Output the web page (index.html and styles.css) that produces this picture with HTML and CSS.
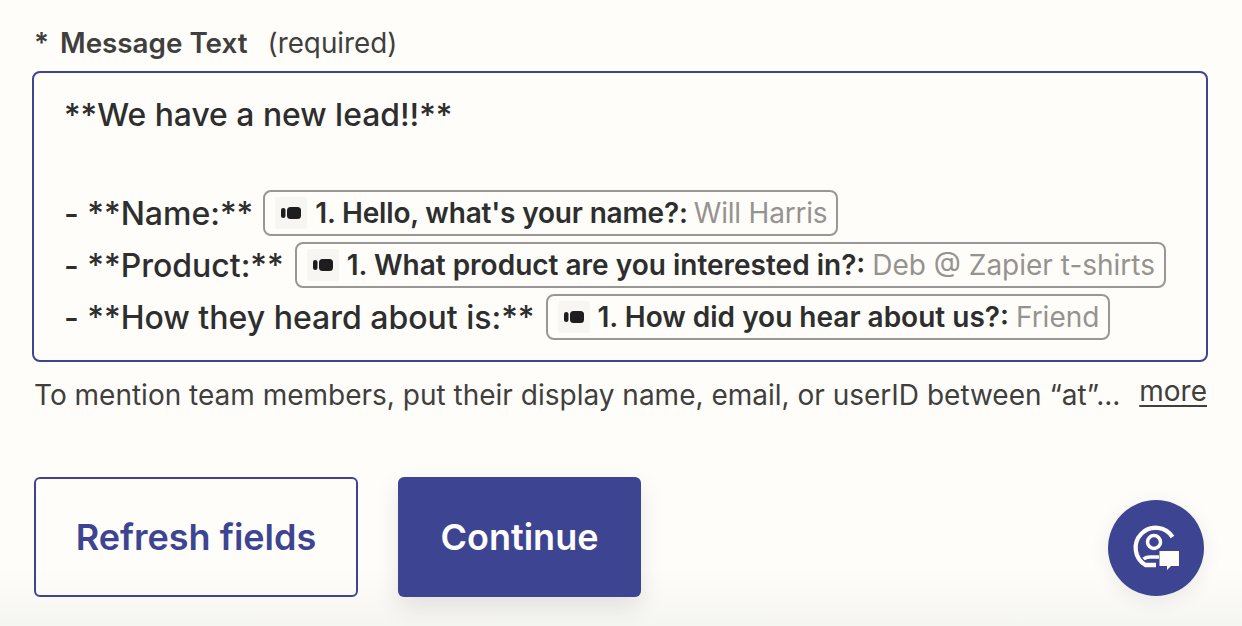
FILE: index.html
```html
<!DOCTYPE html>
<html lang="en">
<head>
    <meta charset="UTF-8">
    <title>Message Text</title>
    <link rel="stylesheet" href="styles.css">
</head>
<body>
    <div class="field">
        <div class="label"><span class="star">*</span><b>Message Text</b><span class="req">(required)</span></div>
        <div class="editor">
            <div class="line first">**We have a new lead!!**</div>
            <div class="line name">- **Name:** <span class="pill tight"><span class="pill-icon"><svg width="20" height="12" viewBox="0 0 20 12"><rect x="0" y="1" width="4.500" height="10" rx="2.200"/><rect x="6" y="0" width="14" height="12" rx="3.500"/></svg></span><b>1. Hello, what's your name?:</b><span class="val">Will Harris</span></span></div>
            <div class="line">- **Product:** <span class="pill"><span class="pill-icon"><svg width="20" height="12" viewBox="0 0 20 12"><rect x="0" y="1" width="4.500" height="10" rx="2.200"/><rect x="6" y="0" width="14" height="12" rx="3.500"/></svg></span><b>1. What product are you interested in?:</b><span class="val">Deb @ Zapier t-shirts</span></span></div>
            <div class="line">- **How they heard about is:** <span class="pill"><span class="pill-icon"><svg width="20" height="12" viewBox="0 0 20 12"><rect x="0" y="1" width="4.500" height="10" rx="2.200"/><rect x="6" y="0" width="14" height="12" rx="3.500"/></svg></span><b>1. How did you hear about us?:</b><span class="val">Friend</span></span></div>
        </div>
        <div class="hint">
            <span>To mention team members, put their display name, email, or userID between “at”...</span>
            <a href="#" class="more">more</a>
        </div>
    </div>
    <div class="actions">
        <button class="btn btn-outline">Refresh fields</button>
        <button class="btn btn-solid">Continue</button>
    </div>
    <div class="fab">
        <svg width="60" height="60" viewBox="0 0 60 60" fill="none">
            <path d="M46.500 19 A20 20 0 1 0 19.500 47 H30" stroke="#fffdf9" stroke-width="4.300"/>
            <circle cx="28" cy="24" r="6.500" stroke="#fffdf9" stroke-width="3.500"/>
            <path d="M17.500 41 Q20 39 24 39 H33" stroke="#fffdf9" stroke-width="3.500"/>
            <path d="M33.500 33 H53 V48 H45 L41 52 V48 H33.500 Z" fill="#fffdf9"/>
        </svg>
    </div>
</body>
</html>
```

FILE: styles.css
```css
html, body {
    height: 100%;
}
body {
    font-family: Inter, "Liberation Sans", sans-serif;
    background: linear-gradient(to bottom, #fffdf9 0, #fffdf9 570px, #f5f5f2 626px);
    color: #2d2e2e;
    margin: 0;
    padding: 28px 34px 0 32px;
    box-sizing: border-box;
    overflow: hidden;
    position: relative;
}
.label {
    display: flex;
    align-items: baseline;
    font-size: 27.800px;
    line-height: 30px;
    color: #403f3e;
    padding-left: 2px;
}
.label b {
    font-weight: 600;
}
.star {
    font-weight: 600;
    margin-right: 11px;
}
.req {
    margin-left: 20px;
}
.editor {
    margin-top: 13px;
    height: 291px;
    box-sizing: border-box;
    border: 2px solid #3d4592;
    border-radius: 8px;
    padding: 16px 30px 0 30px;
}
.line {
    display: flex;
    align-items: center;
    gap: 11px;
    height: 52px;
    font-size: 32px;
    font-weight: 500;
    white-space: nowrap;
}
.line.first {
    height: 50px;
    font-size: 31.850px;
}
.line.name {
    margin-top: 48px;
    gap: 10px;
}
.pill {
    display: inline-flex;
    align-items: center;
    height: 46px;
    box-sizing: border-box;
    border: 2px solid #999795;
    border-radius: 8px;
    padding: 0 9px 0 10px;
    font-size: 28px;
    font-weight: 400;
}
.pill b {
    font-weight: 600;
}
.pill.tight b {
    letter-spacing: -0.170px;
}
.pill.tight .val {
    letter-spacing: -0.200px;
    margin-left: 6px;
}
.pill-icon {
    width: 32px;
    height: 32px;
    background: #f7f6f3;
    border-radius: 3px;
    display: flex;
    align-items: center;
    justify-content: center;
    margin-right: 8px;
}
.pill-icon svg {
    fill: #1d1d1d;
}
.val {
    color: #95938f;
    margin-left: 7px;
}
.hint {
    display: flex;
    justify-content: space-between;
    align-items: flex-start;
    font-size: 28px;
    line-height: 34px;
    color: #403f3e;
    margin-top: 16px;
    padding: 0 1px 0 2px;
}
.more {
    margin-top: -4px;
    color: #403f3e;
    text-decoration: underline;
    text-decoration-thickness: 2px;
    text-underline-offset: 4px;
}
.actions {
    display: flex;
    gap: 40px;
    margin-top: 65px;
    padding-left: 2px;
}
.btn {
    height: 120px;
    font-family: inherit;
    font-size: 36px;
    font-weight: 600;
    border-radius: 6px;
    box-sizing: border-box;
}
.btn-outline {
    width: 324px;
    background: transparent;
    color: #3d4592;
    border: 2px solid #3d4592;
}
.btn-solid {
    width: 243px;
    background: #3d4592;
    color: #fffdf9;
    border: none;
    box-shadow: 0 10px 25px rgba(0, 0, 0, 0.1);
}
.fab {
    position: absolute;
    left: 1108px;
    top: 500px;
    width: 96px;
    height: 96px;
    border-radius: 50%;
    background: #3d4592;
    box-shadow: 0 4px 20px rgba(0, 0, 0, 0.08);
    display: flex;
    align-items: center;
    justify-content: center;
}
```
